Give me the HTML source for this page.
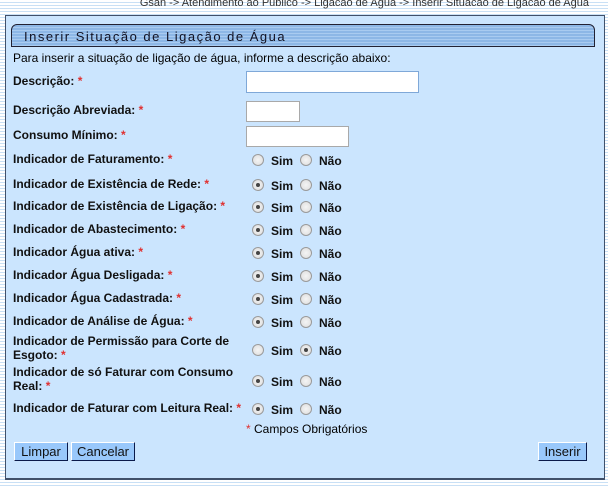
<!DOCTYPE html>
<html><head><meta charset="utf-8"><style>
*{margin:0;padding:0;box-sizing:border-box}
body{width:608px;height:486px;position:relative;overflow:hidden;font-family:"Liberation Sans",Arial,sans-serif;
background:repeating-linear-gradient(to bottom,#fff 0,#fff 2px,#c9e0f5 2px,#c9e0f5 3px);}
.crumb{position:absolute;right:19px;top:-3px;font-size:11px;color:#333}
.panel{position:absolute;left:5px;top:15px;width:600px;height:465px;background:#cbe5fe;border:1px solid #40506a;border-bottom-width:2px}
.title{position:absolute;left:11px;top:24px;width:584px;height:23px;border:1px solid #223;border-radius:6px 6px 0 0;
background:repeating-linear-gradient(to bottom,#8db7e6 0,#8db7e6 2px,#a9cbf0 2px,#a9cbf0 3px);
font-size:13px;letter-spacing:1.5px;color:#112;padding:4px 0 0 12px}
.t{position:absolute;font-size:12px;color:#000;white-space:nowrap}
.b{font-weight:bold;color:#111}
.r{color:#e03030}
.in{position:absolute;background:#fff;border:1px solid #a9a9a9}
.rd{position:absolute;width:12px;height:12px;border-radius:50%;border:1px solid #9a9a9a;background:radial-gradient(circle,#f4f4f4,#dcdcdc)}
.rd.on::after{content:"";position:absolute;left:3px;top:3px;width:4px;height:4px;border-radius:50%;background:#444}
.btn{position:absolute;height:19px;background:#99c8fb;border:1px solid;border-color:#fff #0a1a4a #0a1a4a #fff;font-size:13px;text-align:center;line-height:17px;color:#111}
</style></head><body>
<div class="crumb">Gsan -&gt; Atendimento ao Publico -&gt; Ligacao de Agua -&gt; Inserir Situacao de Ligacao de Agua</div>
<div class="panel"></div>
<div class="title">Inserir Situação de Ligação de Água</div>
<div class="t" style="left:13px;top:51px">Para inserir a situação de ligação de água, informe a descrição abaixo:</div>

<div class="t b" style="left:13px;top:74px">Descrição: <span class="r">*</span></div>
<div class="in" style="left:246px;top:71px;width:173px;height:22px;border-color:#7fa8d8"></div>
<div class="t b" style="left:13px;top:103px">Descrição Abreviada: <span class="r">*</span></div>
<div class="in" style="left:246px;top:101px;width:54px;height:21px"></div>
<div class="t b" style="left:13px;top:128px">Consumo Mínimo: <span class="r">*</span></div>
<div class="in" style="left:246px;top:126px;width:103px;height:21px"></div>

<div id="rows"></div>
<script>
var rows=[["Indicador de Faturamento:",159,0],["Indicador de Existência de Rede:",184,1],["Indicador de Existência de Ligação:",206,1],["Indicador de Abastecimento:",229,1],["Indicador Água ativa:",252,1],["Indicador Água Desligada:",275,1],["Indicador Água Cadastrada:",298,1],["Indicador de Análise de Água:",321,1],["Indicador de Permissão para Corte de<br>Esgoto:",349,2],["Indicador de só Faturar com Consumo<br>Real:",380,1],["Indicador de Faturar com Leitura Real:",408,1]];
var h="";
rows.forEach(function(r){
var two=r[0].indexOf("<br>")>0;
var ty=two?r[1]-15:r[1]-7;
h+='<div class="t b" style="left:13px;top:'+ty+'px;line-height:14px">'+r[0]+' <span class="r">*</span></div>';
h+='<div class="rd'+(r[2]==1?' on':'')+'" style="left:252px;top:'+(r[1]-5)+'px"></div>';
h+='<div class="t b" style="left:271px;top:'+(r[1]-5)+'px">Sim</div>';
h+='<div class="rd'+(r[2]==2?' on':'')+'" style="left:300px;top:'+(r[1]-5)+'px"></div>';
h+='<div class="t b" style="left:319px;top:'+(r[1]-5)+'px">Não</div>';
});
document.getElementById("rows").innerHTML=h;
</script>
<div class="t" style="left:246px;top:422px"><span class="r">*</span> Campos Obrigatórios</div>
<div class="btn" style="left:14px;top:442px;width:54px">Limpar</div>
<div class="btn" style="left:71px;top:442px;width:64px">Cancelar</div>
<div class="btn" style="left:538px;top:442px;width:49px">Inserir</div>
</body></html>
